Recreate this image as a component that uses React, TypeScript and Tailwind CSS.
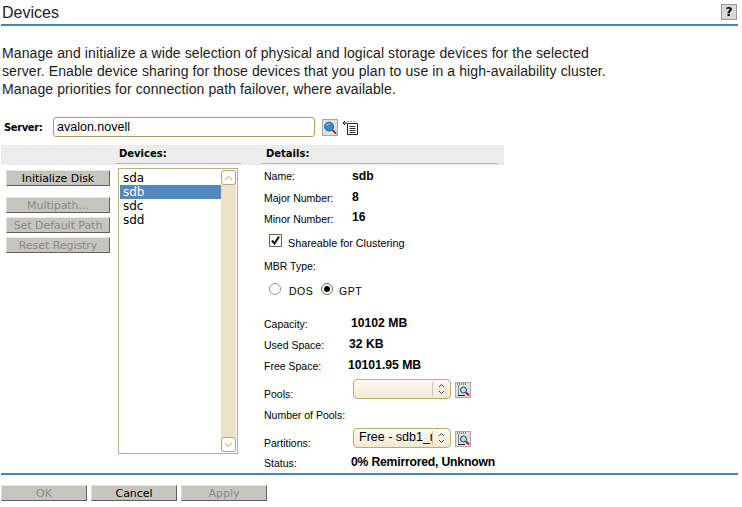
import React from "react";

const Search = () => (
  <svg width="15" height="15" viewBox="0 0 15 15">
    <circle cx="6.5" cy="6.5" r="4.7" fill="#2f8fd8" stroke="#1c4f80" />
    <path d="M4 5.5a3 3 0 0 1 3-2" stroke="#bfe4fb" fill="none" />
    <path d="M10 10l4 4" stroke="#b01030" strokeWidth="2" />
  </svg>
);

const ListSearch = () => (
  <svg width="14" height="14" viewBox="0 0 14 14">
    <path d="M1 1h9M2 3h2M2 5h1M2 7h1M2 9h1M2 11h2" stroke="#333" strokeDasharray="1 1" />
    <path d="M2 12.5h7" stroke="#222" />
    <circle cx="7.5" cy="7" r="3" fill="#bcdcef" stroke="#1c3f70" />
    <path d="M10 9.5l3 3" stroke="#b01030" strokeWidth="2" />
  </svg>
);

const PageArrow = () => (
  <svg width="15" height="15" viewBox="0 0 15 15">
    <path d="M4.5 3.5h10v11h-10z" fill="#fff" stroke="#222" />
    <path d="M6.5 6.5h6M6.5 8.5h6M6.5 10.5h6M6.5 12.5h6" stroke="#333" />
    <path d="M0 3h4M2 1l-2 2 2 2" stroke="#111" fill="none" />
    <path d="M4.5 1.5h1M7.5 1.5h1M10.5 1.5h1" stroke="#555" />
  </svg>
);

const Btn = ({ label, disabled, w }: { label: string; disabled?: boolean; w: string }) => (
  <div
    className={`${w} h-[16px] flex items-center justify-center pt-[2px] tracking-[-0.05px] bg-[#c8c5bf] border-t border-l border-t-[#e8e6e2] border-l-[#dcdad6] border-r border-b border-r-[#5f5f5f] border-b-[#5f5f5f] text-[11px] ${disabled ? "text-[#8a8a86]" : "text-black"}`}
  >
    {label}
  </div>
);

const Label = "text-[10.5px] text-black font-['Liberation_Sans',sans-serif]";

const Row = ({ label, h, children, labelW = "w-[88px]" }: { label: string; h: string; children?: React.ReactNode; labelW?: string }) => (
  <div className={`flex items-center ${h}`}>
    <div className={`${labelW} shrink-0 pt-[2px] ${Label}`}>{label}</div>
    {children}
  </div>
);

const Val = ({ children, mb = "mb-[1px]", cls = "" }: { children: React.ReactNode; mb?: string; cls?: string }) => (
  <span className={`text-[12.2px] font-bold text-black font-['Liberation_Sans',sans-serif] leading-none ${mb} ${cls}`}>{children}</span>
);

const Select = ({ text }: { text?: string }) => (
  <div className="w-[98px] flex items-center h-[20px] border border-[#c0a86f] rounded-[4px] bg-gradient-to-b from-[#fdfbf4] to-[#f0e8d2] overflow-hidden shrink-0">
    <div className="w-[79px] pl-[5px] text-[12.5px] font-['Liberation_Sans',sans-serif] text-black whitespace-nowrap overflow-hidden border-r border-r-[#cfc5a8] h-[14px] leading-[13px]">{text}</div>
    <svg width="17" height="14" viewBox="0 0 17 14">
      <path d="M6 5l2.5-2.5L11 5M6 9l2.5 2.5L11 9" stroke="#444" fill="none" />
    </svg>
  </div>
);

const IconBox = ({ children, h = "h-[16px]" }: { children: React.ReactNode; h?: string }) => (
  <div className={`w-[16px] ${h} bg-[#e0e0dc] border border-[#a8a8a8] flex items-center justify-center overflow-hidden`}>{children}</div>
);

export default function App() {
  return (
    <div className="w-[742px] h-[507px] bg-white overflow-hidden font-['DejaVu_Sans',sans-serif] text-black pl-px flex flex-col">
      <div className="w-[737px] h-[26px] border-b-2 border-b-[#4585bd] flex justify-between pl-px pr-px shrink-0">
        <span className="text-[16px] leading-[25px] text-[#222] font-['Liberation_Sans',sans-serif]">Devices</span>
        <div className="w-[16px] h-[16px] mt-[4px] bg-[#d8d8d4] border border-[#9a9a9a] text-[12px] font-bold flex items-center justify-center">?</div>
      </div>
      <div className="mt-[18px] pl-px text-[14px] tracking-[0.1px] leading-[18px] text-[#1a1a1a] whitespace-nowrap shrink-0 font-['Liberation_Sans',sans-serif]">
        <div>Manage and initialize a wide selection of physical and logical storage devices for the selected</div>
        <div>server. Enable device sharing for those devices that you plan to use in a high-availability cluster.</div>
        <div>Manage priorities for connection path failover, where available.</div>
      </div>
      <div className="mt-[19px] flex items-center h-[20px] shrink-0">
        <span className="ml-[3px] w-[49px] text-[10px] tracking-[-0.4px] font-bold">Server:</span>
        <div className="w-[262px] h-[20px] border border-[#b09a5f] rounded-[3px] pl-[3px] text-[12.5px] leading-[18px] font-['Liberation_Sans',sans-serif]">avalon.novell</div>
        <div className="ml-[7px]"><IconBox h="h-[17px]"><Search /></IconBox></div>
        <div className="ml-[5px]"><PageArrow /></div>
      </div>
      <div className="mt-[8px] w-[503px] h-[20px] bg-[#ededed] flex shrink-0">
        <div className="ml-[114px] w-[126px] h-[19px] border-b border-b-[#b8b8b4] text-[10px] font-bold leading-[18px] pl-[4px]">Devices:</div>
        <div className="ml-[20px] flex-1 h-[19px] border-b border-b-[#b8b8b4] text-[10px] font-bold leading-[18px] pl-[5px] mr-[6px]">Details:</div>
      </div>
      <div className="flex h-[308px] shrink-0">
        <div className="w-[117px] shrink-0 pl-[5px] flex flex-col pt-[5px]">
          <Btn w="w-[104px]" label="Initialize Disk" />
          <div className="mt-[11px] flex flex-col gap-[4px]">
            <Btn w="w-[104px]" label="Multipath..." disabled />
            <Btn w="w-[104px]" label="Set Default Path" disabled />
            <Btn w="w-[104px]" label="Reset Registry" disabled />
          </div>
        </div>
        <div className="w-[120px] h-[286px] mt-[3px] border border-[#c4ae78] flex shrink-0 pl-px pt-px">
          <div className="flex-1 pt-[1px] text-[12px] leading-[14px]">
            <div className="pl-[3px]">sda</div>
            <div className="pl-[3px] bg-[#5288bd] text-white">sdb</div>
            <div className="pl-[3px]">sdc</div>
            <div className="pl-[3px]">sdd</div>
          </div>
          <div className="w-[15px] h-[282px] mr-px rounded-[3px] bg-[#ebe2c8] flex flex-col justify-between">
            <div className="h-[15px] bg-white border border-[#b8a878] rounded-[3px] flex items-center justify-center">
              <svg width="9" height="6"><path d="M1 5l3.5-3.5L8 5" stroke="#d8c89c" fill="none" strokeWidth="1.4" /></svg>
            </div>
            <div className="h-[15px] bg-white border border-[#b8a878] rounded-[3px] flex items-center justify-center">
              <svg width="9" height="6"><path d="M1 1l3.5 3.5L8 1" stroke="#d8c89c" fill="none" strokeWidth="1.4" /></svg>
            </div>
          </div>
        </div>
        <div className="ml-[26px] flex-1 flex flex-col">
          <Row label="Name:" h="h-[22px]"><Val mb="mb-0">sdb</Val></Row>
          <Row label="Major Number:" h="h-[22px]"><Val mb="mb-[2px]">8</Val></Row>
          <Row label="Minor Number:" h="h-[20px]"><Val mb="mb-[4px]">16</Val></Row>
          <div className="flex items-center h-[24px] pl-[5px]">
            <div className="w-[13px] h-[13px] mb-[2px] border border-[#70653f] bg-white flex items-center justify-center">
              <svg width="11" height="11" viewBox="0 0 11 11"><path d="M2 5.5l2.5 3L9 1.5" stroke="#111" strokeWidth="2" fill="none" /></svg>
            </div>
            <span className="ml-[6px] pt-[5px] text-[10.8px] font-['Liberation_Sans',sans-serif]">Shareable for Clustering</span>
          </div>
          <Row label="MBR Type:" h="h-[26px]" />
          <div className="flex items-center h-[22px] pl-[5px] text-[10.5px] font-['Liberation_Sans',sans-serif]">
            <div className="w-[12px] h-[12px] mb-[2px] rounded-full border border-[#a89080] bg-white shrink-0" />
            <span className="ml-[8px] w-[22px] pt-[3px] tracking-[0.5px]">DOS</span>
            <div className="ml-[10px] w-[12px] h-[12px] mb-[2px] rounded-full border border-[#70653f] bg-white flex items-center justify-center shrink-0"><div className="w-[6px] h-[6px] rounded-full bg-black" /></div>
            <span className="ml-[6px] pt-[3px] tracking-[0.5px]">GPT</span>
          </div>
          <div className="h-[12px]" />
          <Row label="Capacity:" h="h-[22px]" labelW="w-[87px]"><Val>10102 MB</Val></Row>
          <Row label="Used Space:" h="h-[20px]" labelW="w-[85px]"><Val>32 KB</Val></Row>
          <Row label="Free Space:" h="h-[22px]" labelW="w-[84px]"><Val>10101.95 MB</Val></Row>
          <div className="flex h-[28px] items-start pt-[2px]">
            <div className={`w-[89px] mt-[8px] shrink-0 ${Label}`}>Pools:</div>
            <Select />
            <div className="ml-[4px] mt-[3px]"><IconBox><ListSearch /></IconBox></div>
          </div>
          <Row label="Number of Pools:" h="h-[20px]" labelW="w-[100px]" />
          <div className="flex h-[28px] items-start pt-[3px]">
            <div className={`w-[89px] mt-[8px] shrink-0 ${Label}`}>Partitions:</div>
            <Select text="Free - sdb1_r" />
            <div className="ml-[4px] mt-[3px]"><IconBox><ListSearch /></IconBox></div>
          </div>
          <Row label="Status:" h="h-[20px]" labelW="w-[87px]"><Val cls="tracking-[-0.2px]">0% Remirrored, Unknown</Val></Row>
        </div>
      </div>
      <div className="w-[737px] h-[2px] bg-[#4585bd] shrink-0" />
      <div className="mt-[10px] flex gap-[4px]">
        <Btn w="w-[86px]" label="OK" disabled />
        <Btn w="w-[86px]" label="Cancel" />
        <Btn w="w-[86px]" label="Apply" disabled />
      </div>
    </div>
  );
}
